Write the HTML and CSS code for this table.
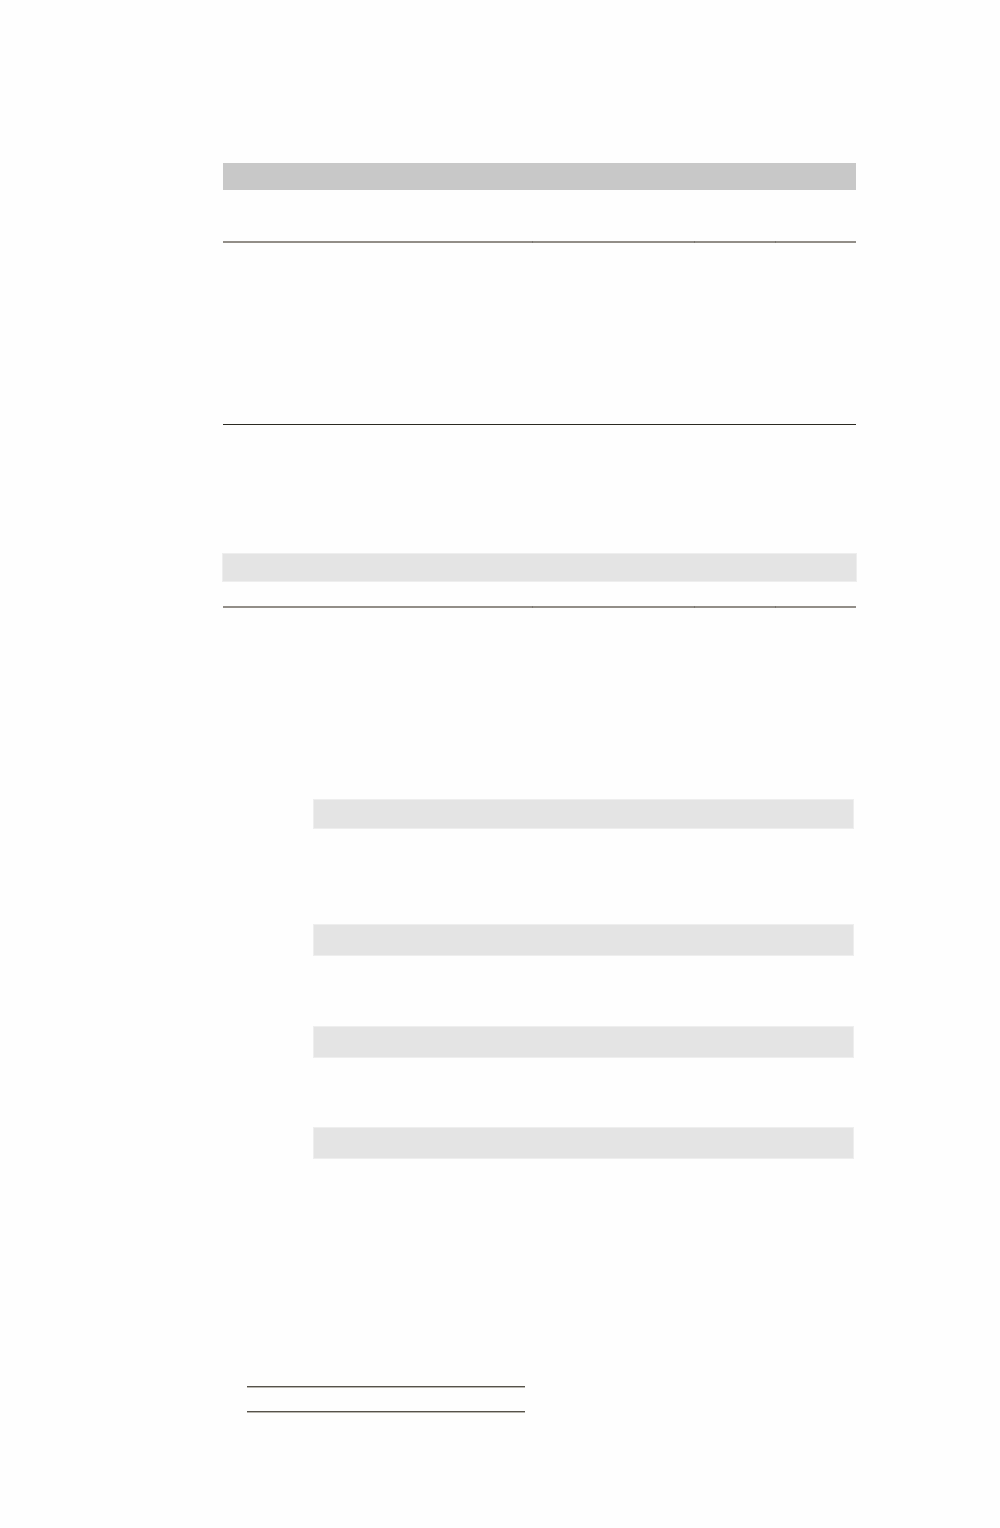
FILE: index.html
```html
<!DOCTYPE html>
<html>
<head>
<meta charset="utf-8">
<link rel="stylesheet" href="styles.css">
</head>
<body>
<div class="page">
  <div class="table">
    <div class="head-bar"></div>
    <div class="rule-row top-rule">
      <div class="cell c1"></div><div class="cell c2"></div><div class="cell c3"></div><div class="cell c4"></div>
    </div>
    <div class="dark-rule"></div>
    <div class="light-bar total-bar"></div>
    <div class="rule-row bottom-rule">
      <div class="cell c1"></div><div class="cell c2"></div><div class="cell c3"></div><div class="cell c4"></div>
    </div>
  </div>
  <div class="list">
    <div class="light-bar item first"></div>
    <div class="light-bar item second"></div>
    <div class="light-bar item third"></div>
    <div class="light-bar item fourth"></div>
  </div>
  <div class="signatures">
    <div class="sig-line"></div>
    <div class="sig-line second-sig"></div>
  </div>
</div>
</body>
</html>
```
FILE: styles.css
```css
html, body {
  margin: 0;
  padding: 0;
  background: #fefefe;
  font-family: "Liberation Sans", Arial, sans-serif;
}
.page {
  width: 1000px;
  height: 1528px;
  padding-top: 163px;
  box-sizing: border-box;
}
.table {
  margin-left: 223px;
  width: 633px;
}
.head-bar {
  height: 27px;
  background: #c8c8c8;
}
.rule-row {
  display: flex;
  height: 2px;
  background: #928e88;
}
.cell {
  height: 2px;
  box-sizing: border-box;
}
.cell + .cell {
  border-left: 1px solid #7a7670;
}
.c1 { width: 309px; }
.c2 { width: 162px; }
.c3 { width: 81px; }
.c4 { width: 81px; }
.top-rule {
  margin-top: 51px;
}
.dark-rule {
  margin-top: 181px;
  height: 1px;
  background: #2b2a22;
}
.light-bar {
  background: #e4e4e4;
  box-shadow: 0 0 0 1px #eeeeee;
}
.total-bar {
  margin-top: 129px;
  height: 27px;
}
.bottom-rule {
  margin-top: 25px;
}
.list {
  margin-left: 314px;
  width: 539px;
}
.item {
  height: 30px;
}
.item.first {
  margin-top: 192px;
  height: 28px;
}
.item.second {
  margin-top: 97px;
}
.item.third {
  margin-top: 72px;
}
.item.fourth {
  margin-top: 71px;
}
.signatures {
  margin-left: 247px;
  width: 278px;
}
.sig-line {
  margin-top: 228px;
  height: 1px;
  background: #55524a;
  box-shadow: 0 1px 0 #b8b6b0;
}
.sig-line.second-sig {
  margin-top: 24px;
}
```
